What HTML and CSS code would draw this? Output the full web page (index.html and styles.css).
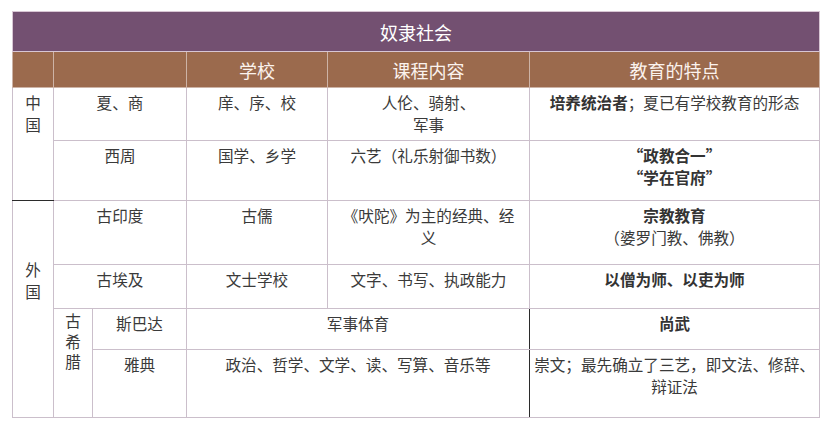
FILE: index.html
```html
<!DOCTYPE html>
<html lang="zh">
<head>
<meta charset="utf-8">
<title>奴隶社会</title>
<link rel="stylesheet" href="styles.css">
</head>
<body>
<table class="edu">
  <colgroup>
    <col class="c1"><col class="c2"><col class="c3"><col class="c4"><col class="c5"><col class="c6">
  </colgroup>
  <tr class="title-row"><th colspan="6">奴隶社会</th></tr>
  <tr class="head-row">
    <th></th><th colspan="2"></th><th>学校</th><th>课程内容</th><th>教育的特点</th>
  </tr>
  <tr class="r1">
    <td rowspan="2" class="region china">中<br>国</td>
    <td colspan="2">夏、商</td>
    <td>庠、序、校</td>
    <td>人伦、骑射、<br>军事</td>
    <td><b>培养统治者</b>；夏已有学校教育的形态</td>
  </tr>
  <tr class="r2">
    <td colspan="2">西周</td>
    <td>国学、乡学</td>
    <td>六艺（礼乐射御书数）</td>
    <td><b>“政教合一”<br>“学在官府”</b></td>
  </tr>
  <tr class="r3">
    <td rowspan="4" class="region foreign">外<br>国</td>
    <td colspan="2">古印度</td>
    <td>古儒</td>
    <td>《吠陀》为主的经典、经<br>义</td>
    <td><b>宗教教育</b><br>（婆罗门教、佛教）</td>
  </tr>
  <tr class="r4">
    <td colspan="2">古埃及</td>
    <td>文士学校</td>
    <td>文字、书写、执政能力</td>
    <td><b>以僧为师、以吏为师</b></td>
  </tr>
  <tr class="r5">
    <td rowspan="2" class="greece">古<br>希<br>腊</td>
    <td>斯巴达</td>
    <td colspan="2" class="dark-right">军事体育</td>
    <td class="dark-left"><b>尚武</b></td>
  </tr>
  <tr class="r6">
    <td>雅典</td>
    <td colspan="2" class="dark-right">政治、哲学、文学、读、写算、音乐等</td>
    <td class="dark-left tight">崇文；最先确立了三艺，即文法、修辞、<br>辩证法</td>
  </tr>
</table>
</body>
</html>
```
FILE: styles.css
```css
body {
  margin: 0;
  background: #ffffff;
}

.edu {
  margin: 11px 0 0 12px;
  width: 807px;
  table-layout: fixed;
  border-collapse: collapse;
  font-family: "Noto Sans CJK SC", "Microsoft YaHei", sans-serif;
  font-size: 15.6px;
  line-height: 22px;
  color: #3a3a3a;
}

.c1 { width: 41px; }
.c2 { width: 39px; }
.c3 { width: 94px; }
.c4 { width: 141px; }
.c5 { width: 202px; }
.c6 { width: 290px; }

.edu th,
.edu td {
  border: 1px solid #cbbfcb;
  text-align: center;
  padding: 0;
}

.edu td {
  vertical-align: top;
  padding: 3px 3px 0;
}

.edu b {
  font-weight: 700;
  color: #333333;
}

.title-row th {
  height: 39px;
  background: #735071;
  color: #ffffff;
  font-weight: 400;
  font-size: 18px;
  border-color: #d8c6d4;
}

.head-row th {
  height: 35px;
  background: #9b6a4d;
  color: #fbf3ee;
  font-weight: 400;
  font-size: 18px;
  border-color: #cdb3a6;
}

.r1 td { height: 49px; }
.r2 td { height: 56px; }
.r3 td { height: 60px; }
.r4 td { height: 40px; }
.r5 td { height: 37px; }
.r6 td { height: 64px; }

.edu td.region {
  padding: 3px 0 0;
}

.edu td.china {
  border-bottom: 1px solid #2b2b2b;
}

.edu td.foreign {
  border-top: 1px solid #2b2b2b;
  padding-top: 57px;
}

.edu td.greece {
  padding: 1px 0 0;
  line-height: 20.5px;
}

.edu td.dark-right {
  border-right: 1px solid #2b2b2b;
}

.edu td.dark-left {
  border-left: 1px solid #2b2b2b;
}

.edu td.tight {
  padding: 3px 1px 0;
}
```
